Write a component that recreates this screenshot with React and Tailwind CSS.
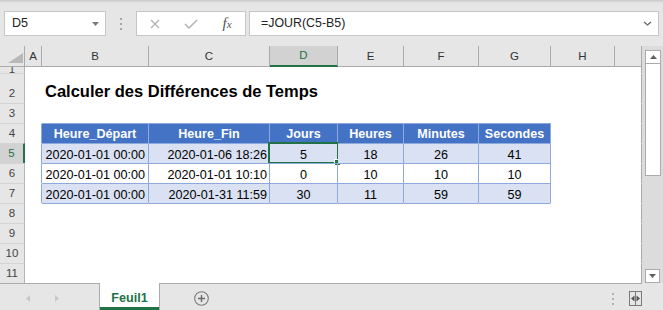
import React from "react";

const COLS = [
  { id: "A", w: "w-[17px]" },
  { id: "B", w: "w-[107px]" },
  { id: "C", w: "w-[121px]" },
  { id: "D", w: "w-[68px]" },
  { id: "E", w: "w-[66px]" },
  { id: "F", w: "w-[75px]" },
  { id: "G", w: "w-[72px]" },
  { id: "H", w: "w-[64px]" },
  { id: "", w: "w-[27px]" },
];

const ROWS = [
  { n: 1, h: "h-[6px]" },
  { n: 2, h: "h-[30px]" },
  { n: 3, h: "h-[20px]" },
  { n: 4, h: "h-[20px]" },
  { n: 5, h: "h-[20px]" },
  { n: 6, h: "h-[20px]" },
  { n: 7, h: "h-[20px]" },
  { n: 8, h: "h-[20px]" },
  { n: 9, h: "h-[20px]" },
  { n: 10, h: "h-[20px]" },
  { n: 11, h: "h-[20px]" },
];

const HEAD = ["Heure_Départ", "Heure_Fin", "Jours", "Heures", "Minutes", "Secondes"];
const BODY = {
  5: ["2020-01-01 00:00", "2020-01-06 18:26", "5", "18", "26", "41"],
  6: ["2020-01-01 00:00", "2020-01-01 10:10", "0", "10", "10", "10"],
  7: ["2020-01-01 00:00", "2020-01-31 11:59", "30", "11", "59", "59"],
};

function cellClass(r, i) {
  const inTable = i >= 1 && i <= 6;
  const parts = [COLS[i].w, "shrink-0 relative flex items-end"];
  if (r > 1) {
    parts.push("border-t");
    parts.push(r >= 4 && r <= 8 && inTable ? "border-t-[#8ea9db]" : "border-t-transparent");
  }
  parts.push("border-r");
  if (i === 8) parts.push("border-r-[#ababab]");
  else if (r >= 4 && r <= 7 && i <= 6) parts.push("border-r-[#8ea9db]");
  else parts.push("border-r-transparent");
  if (inTable && r === 4) parts.push("bg-[#4472c4]");
  if (inTable && (r === 5 || r === 7)) parts.push("bg-[#d9e1f2]");
  return parts.join(" ");
}

function CellContent({ r, i }) {
  if (r === 2 && i === 1) {
    return (
      <span className="whitespace-nowrap pl-[3px] pb-[2px] text-[16.5px] leading-[19px] font-bold text-black">
        Calculer des Différences de Temps
      </span>
    );
  }
  if (r === 4 && i >= 1 && i <= 6) {
    return (
      <span className="w-full text-center pb-[2px] text-[12.6px] leading-[14px] font-bold text-white whitespace-nowrap">
        {HEAD[i - 1]}
      </span>
    );
  }
  if (BODY[r] && i >= 1 && i <= 6) {
    const v = BODY[r][i - 1];
    const align = i === 1 ? "text-right pr-[3px]" : i === 2 ? "text-right pr-[2px]" : "text-center";
    return (
      <span className={`w-full pb-[1px] text-[12.6px] leading-[14px] text-black whitespace-nowrap ${align}`}>
        {v}
      </span>
    );
  }
  return null;
}

function RowHead({ n }) {
  const active = n === 5;
  if (n === 1) {
    return (
      <div className="w-[25px] shrink-0 overflow-hidden bg-[#e6e6e6] border-r border-r-[#b5b5b5] flex items-end justify-center">
        <span className="text-[11.5px] leading-[13px] text-[#444] mb-[-3px]">1</span>
      </div>
    );
  }
  return (
    <div
      className={`w-[25px] shrink-0 border-t border-t-[#d4d4d4] flex items-end justify-center pb-[3px] text-[11.5px] leading-[13px] ${
        active
          ? "bg-[#d2d2d2] text-[#217346] border-r-2 border-r-[#217346]"
          : "bg-[#e6e6e6] text-[#444] border-r border-r-[#b5b5b5]"
      }`}
    >
      {n}
    </div>
  );
}

function FormulaRow() {
  return (
    <div className="flex items-center h-[25px] mt-[8px] mb-[10px]">
      <div className="ml-[4px] w-[102px] h-full bg-white border border-[#c6c6c6] flex items-center justify-between pl-[7px] pr-[6px]">
        <span className="text-[12.6px] text-[#222]">D5</span>
        <svg width="7" height="4" viewBox="0 0 7 4">
          <polygon points="0,0 7,0 3.5,4" fill="#7a7a7a" />
        </svg>
      </div>
      <div className="w-[30px] flex flex-col items-center gap-[3px]">
        <div className="w-[2px] h-[2px] bg-[#a8a8a8]" />
        <div className="w-[2px] h-[2px] bg-[#a8a8a8]" />
        <div className="w-[2px] h-[2px] bg-[#a8a8a8]" />
      </div>
      <div className="w-[110px] h-full bg-white border border-[#c6c6c6] flex">
        <div className="w-[36px] flex items-center justify-center">
          <svg width="10" height="10" viewBox="0 0 10 10">
            <path d="M1 1 L9 9 M9 1 L1 9" stroke="#b3b3b3" strokeWidth="1.3" />
          </svg>
        </div>
        <div className="w-[36px] flex items-center justify-center">
          <svg width="14" height="10" viewBox="0 0 14 10">
            <path d="M1 5 L5 9 L13 1" stroke="#b3b3b3" strokeWidth="1.5" fill="none" />
          </svg>
        </div>
        <div className="w-[36px] flex items-center justify-center pb-[1px]">
          <span className="font-['Liberation_Serif',serif] italic text-[15px] leading-none text-[#555]">
            f<span className="text-[11px]">x</span>
          </span>
        </div>
      </div>
      <div className="ml-[3px] w-[410px] h-full bg-white border border-[#c6c6c6] flex items-center justify-between pl-[11px] pr-[6px]">
        <span className="text-[12.4px] text-[#222]">=JOUR(C5-B5)</span>
        <svg width="9" height="5" viewBox="0 0 9 5">
          <path d="M1 1 L4.5 4 L8 1" stroke="#666" strokeWidth="1.3" fill="none" />
        </svg>
      </div>
    </div>
  );
}

function Sheet() {
  return (
    <div className="w-[642px] flex flex-col">
      <div className="flex h-[21px]">
        <div className="w-[25px] shrink-0 border-r border-b border-[#ababab] flex items-end justify-end pr-[1px] pb-[3px]">
          <svg width="15" height="10" viewBox="0 0 15 10">
            <polygon points="15,0 15,10 0,10" fill="#b8b8b8" />
          </svg>
        </div>
        {COLS.map((c) => (
          <div
            key={c.id || "rest"}
            className={`${c.w} shrink-0 border-r border-r-[#ababab] flex items-end justify-center pb-[3px] text-[11.5px] leading-[13px] ${
              c.id === "D"
                ? "bg-[#d2d2d2] text-[#217346] border-b-2 border-b-[#217346]"
                : "text-[#333] border-b border-b-[#ababab]"
            }`}
          >
            {c.id}
          </div>
        ))}
      </div>
      {ROWS.map((row) => (
        <div key={row.n} className={`flex ${row.h} bg-white`}>
          <RowHead n={row.n} />
          {COLS.map((c, i) => (
            <div key={i} className={cellClass(row.n, i)}>
              <CellContent r={row.n} i={i} />
              {row.n === 5 && i === 3 && (
                <div className="absolute -left-[2px] -top-[2px] w-[71px] h-[22px] border-2 border-[#217346]">
                  <div className="absolute -right-[4px] -bottom-[4px] w-[7px] h-[7px] bg-[#217346] border border-white" />
                </div>
              )}
            </div>
          ))}
        </div>
      ))}
    </div>
  );
}

function VScroll() {
  return (
    <div className="w-[21px] bg-[#dcdcdc] flex flex-col items-start pl-[3px]">
      <div className="mt-[4px] w-[16px] h-[14px] bg-white border border-[#ababab] flex items-center justify-center">
        <svg width="7" height="4" viewBox="0 0 7 4">
          <polygon points="0,4 7,4 3.5,0" fill="#606060" />
        </svg>
      </div>
      <div className="w-[16px] h-[112px] bg-white border border-t-0 border-[#ababab]" />
      <div className="mt-auto w-[15px] h-[14px] bg-white border border-[#ababab] flex items-center justify-center">
        <svg width="7" height="4" viewBox="0 0 7 4">
          <polygon points="0,0 7,0 3.5,4" fill="#606060" />
        </svg>
      </div>
    </div>
  );
}

function TabBar() {
  return (
    <div className="flex h-[27px]">
      <div className="w-[99px] border-t border-[#ababab] flex items-center pt-[3px]">
        <svg className="ml-[26px]" width="4" height="7" viewBox="0 0 4 7">
          <polygon points="4,0 4,7 0,3.5" fill="#c8c8c8" />
        </svg>
        <svg className="ml-[25px]" width="4" height="7" viewBox="0 0 4 7">
          <polygon points="0,0 0,7 4,3.5" fill="#c8c8c8" />
        </svg>
      </div>
      <div className="w-[61px] bg-white border-x border-[#ababab] flex flex-col">
        <div className="flex-1 flex items-center justify-center pt-[5px] text-[12.6px] leading-[14px] font-bold text-[#217346]">
          Feuil1
        </div>
        <div className="h-[3px] bg-[#217346]" />
      </div>
      <div className="w-[482px] border-t border-[#ababab] flex items-center pt-[3px]">
        <svg className="ml-[34px]" width="15" height="15" viewBox="0 0 15 15">
          <circle cx="7.5" cy="7.5" r="6.8" stroke="#7a7a7a" strokeWidth="1.1" fill="none" />
          <path d="M7.5 4 V11 M4 7.5 H11" stroke="#6a6a6a" strokeWidth="1.4" />
        </svg>
        <div className="ml-[403px] flex flex-col gap-[3px]">
          <div className="w-[2px] h-[2px] bg-[#b0b0b0]" />
          <div className="w-[2px] h-[2px] bg-[#b0b0b0]" />
          <div className="w-[2px] h-[2px] bg-[#b0b0b0]" />
        </div>
        <svg className="ml-[15px]" width="13" height="15" viewBox="0 0 13 15">
          <rect x="0.5" y="0.5" width="12" height="14" stroke="#7a7a7a" fill="none" />
          <path d="M6.5 1 V14" stroke="#7a7a7a" />
          <polygon points="2,7.5 5.5,4.5 5.5,10.5" fill="#555" />
          <polygon points="11,7.5 7.5,4.5 7.5,10.5" fill="#555" />
        </svg>
      </div>
      <div className="w-[21px]" />
    </div>
  );
}

export default function App() {
  return (
    <div className="w-[663px] h-[310px] overflow-hidden bg-[#e6e6e6] flex flex-col font-['Liberation_Sans',Arial,sans-serif] text-[#222]">
      <div className="h-[3px] bg-linear-to-b from-[#c8c8c8] to-[#e6e6e6]" />
      <FormulaRow />
      <div className="flex h-[237px]">
        <Sheet />
        <VScroll />
      </div>
      <TabBar />
    </div>
  );
}
